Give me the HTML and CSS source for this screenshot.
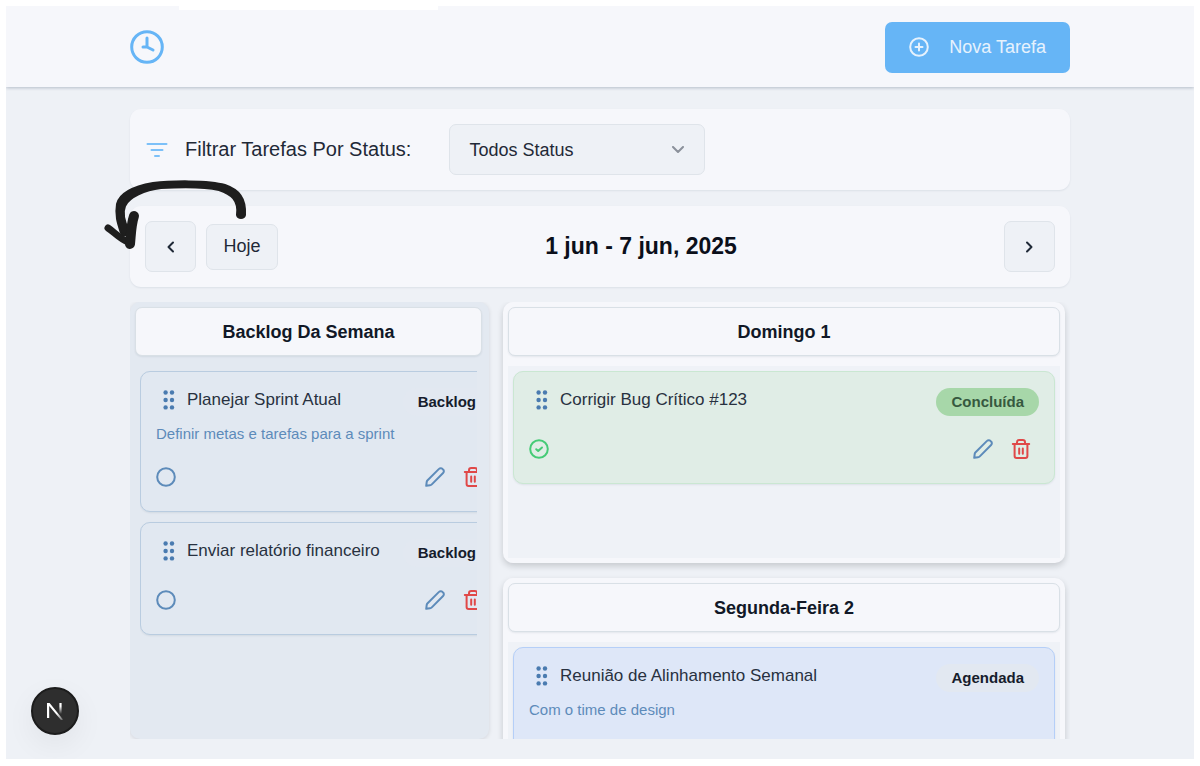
FILE: index.html
```html
<!DOCTYPE html>
<html lang="pt-BR">
<head>
  <meta charset="UTF-8">
  <title>Tarefas da Semana</title>
  <link rel="stylesheet" href="styles.css">
</head>
<body>

  <!-- Shared icons -->
  <svg class="sprite" aria-hidden="true">
    <symbol id="grip" viewBox="0 0 12 20">
      <circle cx="2.600" cy="2.500" r="2.200"/><circle cx="9" cy="2.500" r="2.200"/>
      <circle cx="2.600" cy="10" r="2.200"/><circle cx="9" cy="10" r="2.200"/>
      <circle cx="2.600" cy="17.400" r="2.200"/><circle cx="9" cy="17.400" r="2.200"/>
    </symbol>
    <symbol id="pencil" viewBox="0 0 20 20">
      <path d="M1.200 18.800l.5-3.800c.1-.8.4-1.300.9-1.800L14 1.900a2.400 2.400 0 0 1 3.500 0l.6.600a2.400 2.400 0 0 1 0 3.500L6.800 17.400c-.5.5-1 .8-1.800.9z"/>
    </symbol>
    <symbol id="trash" viewBox="0 0 20 20">
      <path d="M1.800 5h16.400M6 5V3.200A2.200 2.200 0 0 1 8.200 1h3.600A2.200 2.200 0 0 1 14 3.200V5M3.600 5v12a2 2 0 0 0 2 2h8.800a2 2 0 0 0 2-2V5M8.200 9.500v5.200M11.800 9.500v5.200"/>
    </symbol>
  </svg>

  <div class="app">
    <header class="header">
      <div class="header-inner">
        <svg class="logo" viewBox="0 0 34 34" role="img" aria-label="Tarefas">
          <circle cx="17" cy="17" r="15.300"/>
          <path d="M17 8v9l6 3M13 17h4"/>
        </svg>
        <button type="button" class="btn-primary">
          <svg viewBox="0 0 20 20"><circle cx="10" cy="10" r="8.800"/><path d="M10 6.500v7M6.500 10h7"/></svg>
          Nova Tarefa
        </button>
      </div>
    </header>

    <main class="content">
      <section class="panel filter">
        <svg class="filter-icon" viewBox="0 0 22 16"><path d="M1.500 2h19M5.500 8h11M9 14h4"/></svg>
        <label for="status">Filtrar Tarefas Por Status:</label>
        <div class="select-wrap">
          <select id="status">
            <option>Todos Status</option>
            <option>Backlog</option>
            <option>Agendada</option>
            <option>Concluída</option>
          </select>
          <svg class="chevron" viewBox="0 0 14 8"><path d="M2 1l5 5 5-5"/></svg>
        </div>
      </section>

      <section class="panel week">
        <div class="week-buttons">
          <button type="button" class="btn-arrow" aria-label="Semana anterior">
            <svg viewBox="0 0 8 12"><path d="M6 1.500L1.500 6L6 10.500"/></svg>
          </button>
          <button type="button" class="btn-today">Hoje</button>
        </div>
        <h1>1 jun - 7 jun, 2025</h1>
        <button type="button" class="btn-arrow" aria-label="Próxima semana">
          <svg viewBox="0 0 8 12"><path d="M2 1.500L6.500 6L2 10.500"/></svg>
        </button>
        <!-- Hand-drawn arrow -->
        <svg class="sketch-arrow" viewBox="0 0 144 70" aria-hidden="true">
          <path class="fill" d="M134 33c1 4 7 4 8 0 1-17-6-25-20-30C106-2 66-1 50 1 33 4 17 10 14 22c-2 12 1 20 4 29 2 4 8 2 8-2-4-8-7-18-4-25C26 15 42 8 58 6c18-1 45-1 58 2 12 4 20 10 18 25z"/>
          <path d="M5 46c6 4 12 11 20 14"/>
          <path class="thick" d="M31 34c-3 9-3 18-4 28"/>
        </svg>
      </section>

      <div class="board">
        <section class="column backlog">
          <h2>Backlog Da Semana</h2>
          <div class="task-list">
            <article class="task">
              <div class="task-head">
                <svg class="grip"><use href="#grip"/></svg>
                <h3>Planejar Sprint Atual</h3>
                <span class="badge">Backlog</span>
              </div>
              <p>Definir metas e tarefas para a sprint</p>
              <div class="task-actions">
                <button type="button" class="check" aria-label="Concluir"><svg viewBox="0 0 20 20"><circle cx="10" cy="10" r="8.800"/></svg></button>
                <button type="button" class="edit" aria-label="Editar"><svg><use href="#pencil"/></svg></button>
                <button type="button" class="delete" aria-label="Excluir"><svg><use href="#trash"/></svg></button>
              </div>
            </article>
            <article class="task">
              <div class="task-head">
                <svg class="grip"><use href="#grip"/></svg>
                <h3>Enviar relatório financeiro</h3>
                <span class="badge">Backlog</span>
              </div>
              <div class="task-actions">
                <button type="button" class="check" aria-label="Concluir"><svg viewBox="0 0 20 20"><circle cx="10" cy="10" r="8.800"/></svg></button>
                <button type="button" class="edit" aria-label="Editar"><svg><use href="#pencil"/></svg></button>
                <button type="button" class="delete" aria-label="Excluir"><svg><use href="#trash"/></svg></button>
              </div>
            </article>
          </div>
        </section>

        <div class="days">
          <section class="column">
            <h2>Domingo 1</h2>
            <div class="task-list">
              <article class="task done">
                <div class="task-head">
                  <svg class="grip"><use href="#grip"/></svg>
                  <h3>Corrigir Bug Crítico #123</h3>
                  <span class="badge">Concluída</span>
                </div>
                <div class="task-actions">
                  <button type="button" class="check" aria-label="Reabrir"><svg viewBox="0 0 20 20"><circle cx="10" cy="10" r="8.800"/><path d="M7.200 10.200l2 1.800 3.800-3.500"/></svg></button>
                  <button type="button" class="edit" aria-label="Editar"><svg><use href="#pencil"/></svg></button>
                  <button type="button" class="delete" aria-label="Excluir"><svg><use href="#trash"/></svg></button>
                </div>
              </article>
            </div>
          </section>

          <section class="column">
            <h2>Segunda-Feira 2</h2>
            <div class="task-list">
              <article class="task scheduled">
                <div class="task-head">
                  <svg class="grip"><use href="#grip"/></svg>
                  <h3>Reunião de Alinhamento Semanal</h3>
                  <span class="badge">Agendada</span>
                </div>
                <p>Com o time de design</p>
              </article>
            </div>
          </section>
        </div>
      </div>
    </main>

    <button type="button" class="dev-badge" aria-label="Next.js">
      <svg viewBox="0 0 16 17">
        <defs>
          <linearGradient id="fade-bar" x1="0" y1="0" x2="0" y2="1">
            <stop offset="0.300" stop-color="#fff"/>
            <stop offset="1" stop-color="#fff" stop-opacity="0"/>
          </linearGradient>
          <linearGradient id="fade-slash" x1="0" y1="0" x2="1" y2="1">
            <stop offset="0.600" stop-color="#fff"/>
            <stop offset="1" stop-color="#fff" stop-opacity="0.200"/>
          </linearGradient>
        </defs>
        <path d="M0 0h2.600L16 16.500l-1.600 1L2.200 3v12H0z" fill="url(#fade-slash)"/>
        <rect x="12.400" y="0" width="2.200" height="11" fill="url(#fade-bar)"/>
      </svg>
    </button>
  </div>

</body>
</html>
```
FILE: styles.css
```css
* {
  box-sizing: border-box;
}
body {
  margin: 0;
  padding: 6px 6px 7px 6px;
  height: 100vh;
  background-color: white;
  color: #1f2937;
  font-family: "Liberation Sans", Arial, sans-serif;
  font-size: 18px;
}
h1, h2, h3, p {
  margin: 0;
}
button, select {
  font: inherit;
  color: inherit;
}
button {
  display: flex;
  align-items: center;
  justify-content: center;
  padding: 0;
  border: none;
  background: none;
  cursor: pointer;
}
svg {
  flex: none;
  fill: none;
  stroke: currentColor;
  stroke-width: 2;
  stroke-linecap: round;
  stroke-linejoin: round;
}
.sprite {
  display: none;
}
.app {
  position: relative;
  display: flex;
  flex-direction: column;
  height: 100%;
  background-color: #eef1f6;
  overflow: hidden;
}

/* Header */
.header {
  position: relative;
  padding: 0 16px;
  background-color: #f6f7fb;
  box-shadow: 0 1px 3px rgba(15, 40, 70, 0.250);
}
.header::before {
  content: "";
  position: absolute;
  top: 0;
  left: 173px;
  width: 259px;
  height: 4px;
  background-color: white;
}
.header-inner {
  display: flex;
  align-items: center;
  justify-content: space-between;
  max-width: 940px;
  height: 81px;
  margin: 0 auto;
  padding-top: 1px;
}
.logo {
  width: 34px;
  height: 34px;
  color: #66b5f6;
  stroke-width: 3;
}
.btn-primary {
  gap: 20px;
  height: 51px;
  padding: 0 24px;
  border-radius: 7px;
  background-color: #66b5f6;
  color: #e6f2fd;
}
.btn-primary svg {
  width: 20px;
  height: 20px;
}

/* Content */
.content {
  flex: 1;
  display: flex;
  flex-direction: column;
  gap: 16px;
  width: 100%;
  max-width: 940px;
  min-height: 0;
  margin: 0 auto;
  padding: 22px 0 20px;
}
.panel {
  display: flex;
  align-items: center;
  height: 81px;
  padding: 0 15px;
  border-radius: 11px;
  background-color: #f6f7fb;
  box-shadow: 0 1px 2px rgba(15, 40, 70, 0.080);
}
.filter-icon {
  width: 22px;
  height: 16px;
  margin: 0 17px 0 1px;
  color: #7cc0f8;
  stroke-width: 2;
}
.filter label {
  margin-right: 38px;
  font-size: 20px;
}
.select-wrap {
  position: relative;
  width: 256px;
}
.select-wrap select {
  width: 100%;
  height: 51px;
  padding: 0 19px;
  border: 1px solid #dfe4ea;
  border-radius: 7px;
  background-color: #eef1f6;
  appearance: none;
}
.chevron {
  position: absolute;
  top: 22px;
  right: 20px;
  width: 14px;
  height: 8px;
  color: #8b919b;
  pointer-events: none;
}
.week {
  position: relative;
  justify-content: space-between;
}
.week h1 {
  color: #0b0f1a;
  font-size: 23px;
}
.week-buttons {
  display: flex;
  align-items: center;
  gap: 10px;
}
.btn-arrow, .btn-today {
  border: 1px solid #dfe4ea;
  border-radius: 7px;
  background-color: #eef1f6;
}
.btn-arrow {
  width: 51px;
  height: 51px;
}
.btn-arrow svg {
  width: 8px;
  height: 12px;
}
.btn-today {
  width: 72px;
  height: 46px;
}
.sketch-arrow {
  position: absolute;
  top: -24px;
  left: -27px;
  width: 144px;
  height: 70px;
  color: #1e1e1e;
  stroke-width: 7;
  overflow: visible;
  pointer-events: none;
}
.sketch-arrow .fill {
  fill: currentColor;
  stroke-width: 2;
}
.sketch-arrow .thick {
  stroke-width: 10;
}

/* Board */
.board {
  flex: 1;
  display: grid;
  grid-template-columns: 359fr 562fr;
  grid-template-rows: 100%;
  gap: 14px;
  min-height: 0;
  padding-right: 5px;
  margin-top: -1px;
  overflow: hidden;
}
.days {
  display: flex;
  flex-direction: column;
  gap: 15px;
  min-width: 0;
}
.column {
  flex: none;
  min-width: 0;
  padding: 5px;
  border-radius: 10px;
  background-color: #f6f7fb;
  box-shadow: 0 3px 6px rgba(15, 20, 30, 0.180);
}
.column h2 {
  height: 49px;
  margin-bottom: 10px;
  border: 1px solid #d9e0e6;
  border-radius: 7px;
  background-color: #f6f7fb;
  box-shadow: 0 1px 2px rgba(15, 40, 70, 0.080);
  color: #111827;
  font-size: 18px;
  line-height: 48px;
  text-align: center;
}
.task-list {
  display: flex;
  flex-direction: column;
  gap: 10px;
  min-height: 192px;
  padding: 5px;
  background-color: #eff2f7;
}
.backlog {
  padding-right: 7px;
  background-color: #e3e9f1;
  box-shadow: 0 1px 4px rgba(15, 20, 30, 0.120);
}
.backlog .task-list {
  margin: 0 5px;
  padding: 5px 0;
  background: none;
  overflow: hidden;
}
.backlog .task {
  width: 367px;
}

/* Tasks */
.task {
  padding: 16px 15px;
  border: 1px solid #b9cce0;
  border-radius: 10px;
  background-color: #e1e8f1;
  box-shadow: 0 1px 2px rgba(15, 40, 70, 0.080);
}
.task-head {
  display: flex;
  align-items: flex-start;
  height: 34px;
  padding-left: 7px;
}
.grip {
  width: 12px;
  height: 20px;
  margin: 2px 12px 0 0;
  fill: #4a7bb0;
  stroke: none;
}
.task h3 {
  flex: 1;
  color: #283140;
  font-size: 17px;
  font-weight: normal;
  line-height: 24px;
}
.badge {
  height: 28px;
  padding: 0 15px;
  border-radius: 14px;
  background-color: #e2e8f1;
  color: #161c2c;
  font-size: 15px;
  font-weight: bold;
  line-height: 28px;
}
.task p {
  height: 28px;
  color: #5d8bba;
  font-size: 15px;
  line-height: 24px;
}
.task-actions {
  display: flex;
  align-items: flex-end;
  height: 37px;
  margin-bottom: 8px;
  padding-right: 8px;
}
.task-actions svg {
  width: 20px;
  height: 20px;
}
.check {
  margin-right: auto;
  color: #5d8bba;
}
.edit {
  margin-right: 18px;
  color: #5d8bba;
}
.delete {
  color: #e04848;
}
.done {
  border-color: #cae7d2;
  background-color: #e0ede6;
}
.done .badge {
  background-color: #a7d7a9;
  color: #36593f;
}
.done .check {
  color: #45cb76;
}
.scheduled {
  min-height: 141px;
  border-color: #b5cff8;
  background-color: #dee7f8;
}

/* Floating dev button */
.dev-badge {
  position: absolute;
  bottom: 24px;
  left: 25px;
  width: 48px;
  height: 48px;
  border: 2px solid #1c1c1c;
  border-radius: 50%;
  background-color: #2e2e2e;
  box-shadow: 0 10px 30px rgba(0, 0, 0, 0.060);
}
.dev-badge svg {
  width: 16px;
  height: 17px;
  stroke: none;
}
```
